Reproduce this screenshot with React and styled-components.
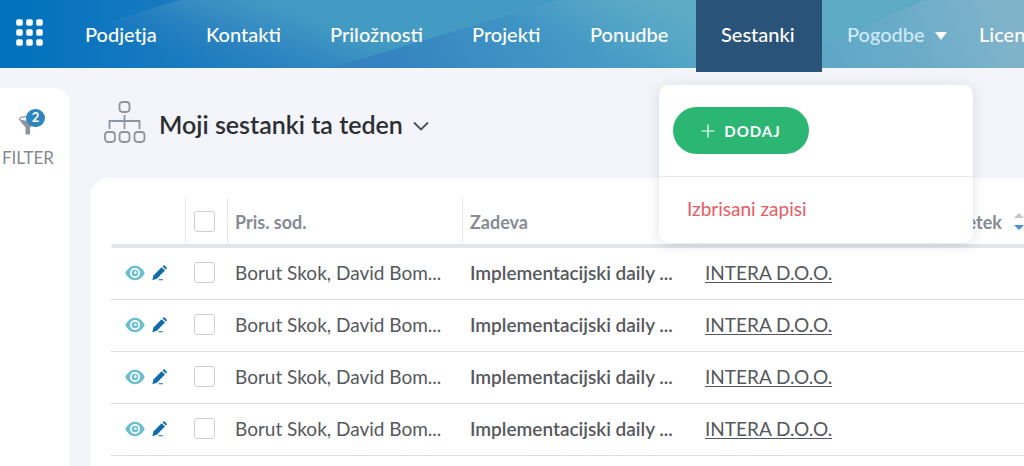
import React from "react";
import styled, { createGlobalStyle } from "styled-components";

const navItems = [
  { label: "Podjetja", width: 121 },
  { label: "Kontakti", width: 124 },
  { label: "Priložnosti", width: 142 },
  { label: "Projekti", width: 118 },
  { label: "Ponudbe", width: 131 },
  { label: "Sestanki", width: 126, active: true },
  { label: "Pogodbe", width: 132, more: true },
  { label: "Licence", width: 122 }
];

const meetings = [1, 2, 3, 4].map((id) => ({
  id,
  people: "Borut Skok, David Bom...",
  subject: "Implementacijski daily ...",
  company: "INTERA D.O.O."
}));

const AppsIcon = () => (
  <svg width="28" height="28" viewBox="0 0 28 28" fill="#fff">
    {[0, 10, 20].map((y) =>
      [0, 10, 20].map((x) => (
        <rect key={`${x}-${y}`} x={x + 0.2} y={y + 0.2} width="6.6" height="6.6" rx="1.8" />
      ))
    )}
  </svg>
);

const TreeIcon = () => (
  <svg width="42" height="42" viewBox="0 0 42 42" fill="none" stroke="#8f959e" strokeWidth="1.8">
    <rect x="15.5" y="1" width="10" height="10" rx="3.2" />
    <rect x="1" y="31" width="10" height="10" rx="3.2" />
    <rect x="15.5" y="31" width="10" height="10" rx="3.2" />
    <rect x="30.500" y="31" width="10" height="10" rx="3.2" />
    <path d="M20.500 14v14M5.500 28v-8h30v8" />
  </svg>
);

const FunnelIcon = () => (
  <svg width="20" height="20" viewBox="0 0 20 20">
    <path d="M0.500 4 L7.500 12.500 V19.500 H12 V12.500 L19.500 4 Z" fill="#8e929a" />
    <ellipse cx="10" cy="4" rx="8.500" ry="2.400" fill="#fff" stroke="#8e929a" strokeWidth="1.2" />
  </svg>
);

const EyeIcon = () => (
  <svg width="20" height="16" viewBox="0 0 20 16">
    <path d="M0.300 8C2.500 3.400 6 0.800 10 0.800S17.500 3.400 19.700 8C17.500 12.600 14 15.200 10 15.200S2.500 12.600 0.300 8Z" fill="#6bbfd0" />
    <circle cx="10" cy="8" r="5" fill="#fff" />
    <circle cx="10" cy="8" r="3.300" fill="#6bbfd0" />
    <circle cx="10.300" cy="7.600" r="1.300" fill="#fff" />
  </svg>
);

const PencilIcon = () => (
  <svg width="16" height="16" viewBox="0 0 16 16" fill="#0d6cae">
    <path d="M0.300 15.200 L1.500 10.600 L9.600 2.300 L13 5.500 L4.800 13.800 Z" />
    <path d="M10.500 1.500 L12 0.100 L15.300 3.200 L13.800 4.600 Z" />
    <path d="M6.800 14.200h4v1.100H6.300z" />
  </svg>
);

const HeaderArt = () => (
  <Art viewBox="0 0 1024 68" preserveAspectRatio="none" aria-hidden="true">
    <defs>
      <linearGradient id="base" gradientUnits="userSpaceOnUse" x1="0" y1="0" x2="340" y2="0">
        <stop offset="0" stopColor="#0071bd" />
        <stop offset="0.25" stopColor="#0c75bf" />
        <stop offset="1" stopColor="#2f84bf" />
      </linearGradient>
      <linearGradient id="left" gradientUnits="userSpaceOnUse" x1="240" y1="80" x2="270" y2="0">
        <stop offset="0" stopColor="#2f84c0" stopOpacity="0" />
        <stop offset="0.25" stopColor="#2b81c0" stopOpacity="0.5" />
        <stop offset="0.6" stopColor="#358bc1" />
        <stop offset="1.0" stopColor="#439bc3" />
      </linearGradient>
      <linearGradient id="middle" gradientUnits="userSpaceOnUse" x1="400" y1="90" x2="640" y2="-60">
        <stop offset="0" stopColor="#3482c0" />
        <stop offset="0.5" stopColor="#4095c4" />
        <stop offset="1" stopColor="#52a5c6" />
      </linearGradient>
      <linearGradient id="light" gradientUnits="userSpaceOnUse" x1="600" y1="50" x2="625" y2="-15">
        <stop offset="0" stopColor="#5fabc5" stopOpacity="0" />
        <stop offset="1" stopColor="#5fabc5" stopOpacity="0.9" />
      </linearGradient>
      <linearGradient id="right" gradientUnits="userSpaceOnUse" x1="800" y1="68" x2="1000" y2="0">
        <stop offset="0" stopColor="#5ba5c7" />
        <stop offset="0.5" stopColor="#69abc8" />
        <stop offset="1" stopColor="#80b3ca" />
      </linearGradient>
    </defs>
    <rect width="1024" height="68" fill="url(#base)" />
    <path d="M0 55 L180 0 H580 L330 68 H0Z" fill="url(#left)" />
    <path d="M330 68 L560 0 H1024 V68Z" fill="url(#middle)" />
    <path d="M400 47 L560 0 H930 L800 68 H400Z" fill="url(#light)" />
    <path d="M780 64 L925 0 H1024 V68H780Z" fill="url(#right)" />
  </Art>
);

const Header = () => (
  <TopBar>
    <HeaderArt />
    <AppsButton aria-label="Aplikacije">
      <AppsIcon />
    </AppsButton>
    <Nav>
      {navItems.map((item) => (
        <NavItem key={item.label} $width={item.width} $active={item.active}>
          <NavLink href="#" $muted={item.more}>
            {item.label}
            {item.more && <Caret />}
          </NavLink>
          {item.active && <MeetingsMenu />}
        </NavItem>
      ))}
    </Nav>
  </TopBar>
);

const MeetingsMenu = () => (
  <Menu>
    <MenuTop>
      <AddButton>
        <svg width="14" height="14" viewBox="0 0 14 14" stroke="#fff" strokeWidth="1.2">
          <path d="M7 0.500v13M0.500 7h13" />
        </svg>
        DODAJ
      </AddButton>
    </MenuTop>
    <DeletedLink href="#">Izbrisani zapisi</DeletedLink>
  </Menu>
);

const MeetingsTable = () => (
  <Table>
    <colgroup>
      <Col $width={74} />
      <Col $width={42} />
      <Col $width={235} />
      <Col $width={235} />
      <Col $width={233} />
      <Col $width={235} />
    </colgroup>
    <thead>
      <tr>
        <HeadCell aria-label="Dejanja" />
        <HeadCell $line>
          <Checkbox aria-label="Izberi vse" />
        </HeadCell>
        <HeadCell $line>Pris. sod.</HeadCell>
        <HeadCell $line>Zadeva</HeadCell>
        <HeadCell $line aria-label="Podjetje" />
        <HeadCell $line>
          <SortLabel>
            Začetek
            <svg width="10" height="18" viewBox="0 0 10 18">
              <path d="M0 5 L5 0 L10 5Z" fill="#c3c6cb" />
              <path d="M0 12 L5 17 L10 12Z" fill="#4a90d9" />
            </svg>
          </SortLabel>
        </HeadCell>
      </tr>
    </thead>
    <tbody>
      {meetings.map((meeting) => (
        <tr key={meeting.id}>
          <Cell>
            <Actions>
              <IconButton aria-label="Poglej">
                <EyeIcon />
              </IconButton>
              <IconButton aria-label="Uredi">
                <PencilIcon />
              </IconButton>
            </Actions>
          </Cell>
          <Cell>
            <Checkbox aria-label="Izberi" />
          </Cell>
          <Cell>{meeting.people}</Cell>
          <Cell $strong>{meeting.subject}</Cell>
          <Cell>
            <a href="#">{meeting.company}</a>
          </Cell>
          <Cell />
        </tr>
      ))}
    </tbody>
  </Table>
);

const App = () => {
  return (
    <Page>
      <GlobalStyle />
      <Header />
      <Body>
        <FilterPanel>
          <FilterButton>
            <FunnelIcon />
            <Badge>2</Badge>
            <span>FILTER</span>
          </FilterButton>
        </FilterPanel>
        <Main>
          <TitleRow>
            <TreeIcon />
            <Title>Moji sestanki ta teden</Title>
            <svg width="16" height="10" viewBox="0 0 16 10" fill="none" stroke="#4a4f57" strokeWidth="1.8">
              <path d="M1 1.500 L8 8.500 L15 1.500" />
            </svg>
          </TitleRow>
          <Card>
            <MeetingsTable />
          </Card>
        </Main>
      </Body>
    </Page>
  );
};

export default App;

const GlobalStyle = createGlobalStyle`
  * {
    box-sizing: border-box;
  }
  body {
    margin: 0;
    background: #f3f5fa;
    font-family: Lato, "Open Sans", sans-serif;
    font-size: 19px;
    color: #55585c;
  }
  button {
    font-family: inherit;
    border: none;
    background: none;
    padding: 0;
    cursor: pointer;
  }
  svg {
    flex: none;
  }
`;

const Page = styled.div`
  display: flex;
  flex-direction: column;
  min-height: 100vh;
  overflow-x: clip;
`;

const TopBar = styled.header`
  position: relative;
  z-index: 2;
  display: flex;
  height: 68px;
`;

const Art = styled.svg`
  position: absolute;
  inset: 0;
  width: 100%;
  height: 100%;
`;

const AppsButton = styled.button`
  position: relative;
  display: flex;
  flex: none;
  align-items: center;
  width: 60px;
  padding: 0 0 2px 16px;
`;

const Nav = styled.nav`
  position: relative;
  display: flex;
`;

const NavItem = styled.div`
  position: relative;
  flex: none;
  width: ${(props) => props.$width}px;
  height: ${(props) => (props.$active ? "72px" : "68px")};
  background: ${(props) => (props.$active ? "#2a537a" : "none")};
`;

const NavLink = styled.a`
  display: flex;
  align-items: center;
  gap: 10px;
  height: 68px;
  padding: 0 0 1px 25px;
  font-size: 20px;
  font-weight: 500;
  text-decoration: none;
  white-space: nowrap;
  color: ${(props) => (props.$muted ? "#cfe9f7" : "#fff")};
`;

const Caret = styled.span`
  margin-top: 4px;
  border: 6px solid transparent;
  border-top: 8px solid #fff;
  border-bottom: none;
`;

const Menu = styled.div`
  position: absolute;
  top: 85px;
  left: -37px;
  width: 314px;
  background: #fff;
  border-radius: 10px;
  box-shadow: 0 2px 14px rgba(40, 50, 80, 0.14);
`;

const MenuTop = styled.div`
  padding: 22px 14px;
  border-bottom: 1px solid #e9eaee;
`;

const AddButton = styled.button`
  display: flex;
  align-items: center;
  justify-content: center;
  gap: 9px;
  width: 136px;
  height: 47px;
  border-radius: 24px;
  background: #2bb673;
  color: #fff;
  font-size: 15px;
  font-weight: 700;
  letter-spacing: 1px;
`;

const DeletedLink = styled.a`
  display: flex;
  align-items: center;
  height: 66px;
  padding: 0 28px 4px;
  color: #ea5a62;
  text-decoration: none;
`;

const Body = styled.div`
  display: flex;
  flex: 1;
  padding-top: 20px;
`;

const FilterPanel = styled.aside`
  flex: none;
  width: 70px;
  background: #fff;
  border-top-right-radius: 16px;
`;

const FilterButton = styled.button`
  position: relative;
  display: flex;
  flex-direction: column;
  align-items: center;
  gap: 12px;
  width: 56px;
  padding-top: 27px;
  font-size: 17px;
  color: #85898f;
`;

const Badge = styled.b`
  position: absolute;
  top: 21px;
  left: 26px;
  width: 19px;
  height: 18px;
  border-radius: 9px;
  background: #2e86c1;
  color: #fff;
  font-size: 13px;
  line-height: 17px;
  text-align: center;
`;

const Main = styled.main`
  display: flex;
  flex: 1;
  flex-direction: column;
  min-width: 0;
  padding-left: 20px;
`;

const TitleRow = styled.div`
  display: flex;
  align-items: center;
  height: 90px;
  padding: 0 14px 22px;
`;

const Title = styled.h1`
  margin: 0 10px 0 13px;
  padding-top: 3px;
  font-size: 25px;
  font-weight: 600;
  color: #2b2e33;

  & + svg {
    margin-top: 8px;
  }
`;

const Card = styled.section`
  flex: 1;
  padding: 19px 0 0 21px;
  overflow: hidden;
  background: #fff;
  border-top-left-radius: 20px;
`;

const Table = styled.table`
  width: 1054px;
  table-layout: fixed;
  border-collapse: separate;
  border-spacing: 0;
`;

const Col = styled.col`
  width: ${(props) => props.$width}px;
`;

const HeadCell = styled.th`
  height: 51px;
  padding: 2px 7px 0;
  border-bottom: 4px solid #e4e5e8;
  border-left: 1px solid ${(props) => (props.$line ? "#e7e8ec" : "#fff")};
  color: #878b93;
  font-size: 18px;
  font-weight: 700;
  text-align: left;
`;

const SortLabel = styled.span`
  display: flex;
  align-items: center;
  gap: 12px;
`;

const Cell = styled.td`
  height: 52px;
  padding: 0 0 2px 8px;
  border-bottom: 1px solid #dcdde0;
  font-weight: ${(props) => (props.$strong ? 600 : 400)};
  white-space: nowrap;

  a {
    color: inherit;
    text-underline-offset: 2px;
  }
`;

const Actions = styled.div`
  display: flex;
  align-items: center;
  gap: 7px;
  padding-left: 6px;
`;

const IconButton = styled.button`
  display: flex;
`;

const Checkbox = styled.input.attrs({ type: "checkbox" })`
  display: block;
  appearance: none;
  width: 21px;
  height: 21px;
  margin: 0 1px;
  border: 1px solid #cdcfd3;
  border-radius: 3px;
  background: #fff;
`;
